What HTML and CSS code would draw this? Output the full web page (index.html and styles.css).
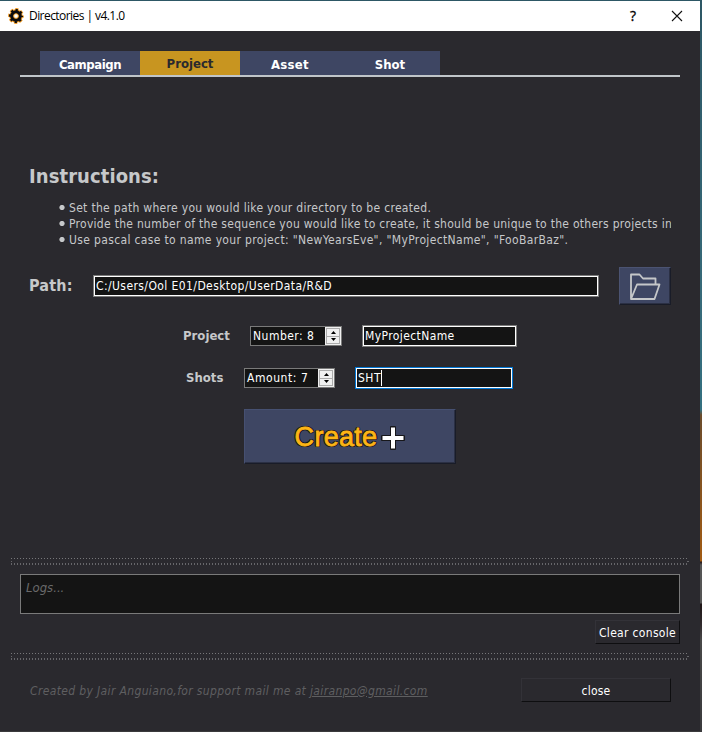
FILE: index.html
```html
<!DOCTYPE html>
<html lang="en">
<head>
<meta charset="utf-8">
<title>Directories | v4.1.0</title>
<link rel="stylesheet" href="styles.css">
</head>
<body>
<div class="window">
  <header class="titlebar">
    <svg class="gear" width="16" height="16" viewBox="0 0 16 16"><g fill="none" stroke="#f39a1d"><circle cx="8" cy="8" r="4.2" stroke-width="5"/><circle cx="8" cy="8" r="6.1" stroke-width="3.6" stroke-dasharray="2.9 1.89" stroke-dashoffset="1.4"/></g><g fill="none" stroke="#0c0c10"><circle cx="8" cy="8" r="4.2" stroke-width="3.2"/><circle cx="8" cy="8" r="5.9" stroke-width="2.2" stroke-dasharray="2.2 2.434" stroke-dashoffset="1.1"/></g><circle cx="8" cy="8" r="2.3" fill="#fff" stroke="#f39a1d" stroke-width=".8"/></svg>
    <span class="title">Directories | v4.1.0</span>
    <span class="help">?</span>
    <svg class="x" width="12" height="12" viewBox="0 0 12 12"><path d="M1 1l10 10M11 1L1 11" stroke="#111" stroke-width="1.1"/></svg>
  </header>
  <nav class="tabs"><span class="campaign">Campaign</span><span class="active">Project</span><span class="asset">Asset</span><span>Shot</span></nav>
  <main>
    <h1>Instructions:</h1>
    <ul>
      <li class="l1">Set the path where you would like your directory to be created.</li>
      <li class="l2">Provide the number of the sequence you would like to create, it should be unique to the others projects in</li>
      <li class="l3">Use pascal case to name your project: "NewYearsEve", "MyProjectName", "FooBarBaz".</li>
    </ul>
    <div class="path-row">
      <span class="path-label">Path:</span>
      <div class="field path"><span>C:/Users/Ool E01/Desktop/UserData/R&amp;D</span></div>
      <button class="folder"><svg width="32" height="28" viewBox="0 0 32 28"><path d="M2 27V2.500h8.500l3.500 4h12.500v5M2 27L8 12.500h22.500L25.500 27z" fill="none" stroke="#c5c7c9" stroke-width="1.800" stroke-linejoin="round"/></svg></button>
    </div>
    <div class="row project">
      <span class="label">Project</span>
      <div class="spin"><span>Number: 8</span><div class="steps"><i><svg width="5" height="3"><path d="M0 3L2.500 0 5 3z"/></svg></i><i><svg width="5" height="3"><path d="M0 0h5L2.500 3z"/></svg></i></div></div>
      <div class="field name"><span>MyProjectName</span></div>
    </div>
    <div class="row shots">
      <span class="label">Shots</span>
      <div class="spin"><span>Amount: 7</span><div class="steps"><i><svg width="5" height="3"><path d="M0 3L2.500 0 5 3z"/></svg></i><i><svg width="5" height="3"><path d="M0 0h5L2.500 3z"/></svg></i></div></div>
      <div class="field prefix"><span>SHT</span><b class="caret"></b></div>
    </div>
    <button class="create"><span>Create</span><svg width="24" height="24" viewBox="0 0 24 24"><path d="M12 2v20M2 12h20" stroke="#17171a" stroke-width="6" stroke-linecap="round"/><path d="M12 1.500v21M1.500 12h21" stroke="#fff" stroke-width="4"/></svg></button>
  </main>
  <div class="splitter"></div>
  <div class="logs"><em>Logs...</em></div>
  <button class="clear"><span>Clear console</span></button>
  <div class="splitter second"></div>
  <footer>
    <em class="credit">Created by Jair Anguiano,for support mail me at <u>jairanpo@gmail.com</u></em>
    <button class="close"><span>close</span></button>
  </footer>
</div>
</body>
</html>
```
FILE: styles.css
```css
* { box-sizing: border-box; }
body {
  margin: 0; width: 702px; height: 732px; overflow: hidden;
  padding: 1px 2px 2px 0;
  background: linear-gradient(#2d5765 0, #376b7a 300px, #347080 410px, #6b4c2c 415px, #a25b13 561px, #24181a 562px, #555 565px, #555 603px, #201718 604px, #302a2d 625px, #484848 640px, #3a3a3c 732px);
  font: 12px/16px "DejaVu Sans Condensed", "DejaVu Sans", sans-serif;
  color: #c6c8ca;
}
.window { height: 730px; background: #2a292e; overflow: hidden; white-space: nowrap; display: flex; flex-direction: column; }
.window > * { flex-shrink: 0; }
button { font: inherit; color: #fff; padding: 0; border-radius: 0; display: flex; align-items: center; justify-content: center; }
.titlebar { height: 30px; background: #fff; color: #000; display: flex; align-items: center; padding: 0 17px 0 8px; font: 12px/16px "Open Sans", sans-serif; }
.title { margin-left: 5px; letter-spacing: -.56px; }
.help { margin-left: auto; font-size: 14px; -webkit-text-stroke: .3px #000; }
.x { margin-left: 35px; }
.tabs { display: flex; height: 46px; margin: 0 20px; padding: 20px 20px 0; border-bottom: 2px solid #c0c5c9; }
.tabs span { width: 100px; background: #3e4663; color: #fff; font-weight: bold; font-size: 13px; line-height: 27px; text-align: center; }
.tabs .active { background: #c89520; color: #2a292e; line-height: 25px; }
.tabs .campaign { letter-spacing: -.45px; }
.tabs .asset { letter-spacing: .3px; }
main { height: 481px; padding: 84px 29px 0 29px; }
h1 { margin: 0; font-size: 20px; line-height: 30px; height: 39px; letter-spacing: .08px; }
ul { margin: 0; padding: 0 0 0 40px; height: 67px; list-style: none; width: 642px; }
li { height: 16px; overflow: hidden; margin-left: -10px; padding-left: 10px; background: radial-gradient(circle at 3px 7.5px, #c6c8ca 2.200px, transparent 3px); }
.l1 { letter-spacing: .31px; }
.l2 { letter-spacing: .28px; }
.l3 { letter-spacing: .35px; }
.path-row { display: flex; align-items: center; height: 38px; }
.path-label { width: 64px; font-size: 16px; font-weight: bold; letter-spacing: .2px; }
.field { height: 22px; border: 1px solid #7a7a7a; box-shadow: inset 0 0 0 1px #fff; background: #141414; color: #fff; line-height: 20px; padding-left: 2px; display: flex; align-items: center; }
.path { width: 506px; letter-spacing: .41px; }
.folder { width: 52px; height: 38px; margin-left: 20px; background: #3e4663; border: 1px solid #4b5372; border-right-color: #191c28; border-bottom-color: #191c28; box-shadow: inset -1px -1px #2b3044; }
.row { display: flex; align-items: center; height: 22px; }
.project { margin: 20px 0 0 154px; }
.shots { margin: 20px 0 0 157px; }
.label { font-size: 13px; font-weight: bold; width: 67px; }
.shots .label { width: 58px; }
.spin { width: 92px; height: 20px; border: 1px solid #7a7a7a; background: #141414; color: #fff; padding-left: 2px; display: flex; align-items: center; justify-content: space-between; letter-spacing: .48px; }
.shots .spin { width: 91px; letter-spacing: .55px; }
.steps { width: 16px; height: 18px; background: #f0f0f0; padding: 1px; display: flex; flex-direction: column; }
.steps i { flex: 1; display: flex; align-items: center; justify-content: center; border: 1px solid #acacac; }
.steps i + i { border-top: 0; }
.name { width: 155px; margin-left: 20px; letter-spacing: .4px; }
.prefix { width: 158px; margin-left: 20px; border-color: #0078d7; letter-spacing: .5px; }
.caret { width: 1px; height: 16px; background: #fff; }
.create { width: 212px; height: 55px; margin: 20px 0 0 215px; background: #3e4663; border: 1px solid #465071; border-right-color: #191c28; border-bottom-color: #191c28; box-shadow: inset -1px -1px #2b3044; font: 27px/30px "Liberation Sans", sans-serif; color: #fdb515; gap: 4px; }
.create span { letter-spacing: .3px; -webkit-text-stroke: .8px #fdb515; text-shadow: -1px -1px #17171a, 0 -1.300px #17171a, 1px -1px #17171a, -1.300px 0 #17171a, 1.300px 0 #17171a, -1px 1px #17171a, 0 1.300px #17171a, 1px 1px #17171a; }
.create svg { margin-top: 2px; }
.splitter { height: 8px; margin: 0 11px; background:
  repeating-linear-gradient(90deg, #77777a 0 1px, transparent 1px 3px) 0 0 / 100% 1px no-repeat,
  repeating-linear-gradient(90deg, #66666a 0 1px, transparent 1px 3px) 0 5px / 100% 2px no-repeat,
  linear-gradient(#66666a, #66666a) 0 3px / 1px 1px no-repeat,
  linear-gradient(#66666a, #66666a) 100% 3px / 2px 1px no-repeat; }
.logs { margin: 8px 20px 0; height: 40px; border: 1px solid #7a7a7a; background: #141414; color: #69696a; padding: 5px; font-size: 13px; }
.clear { width: 85px; height: 24px; margin: 6px 0 0 595px; letter-spacing: .32px; }
.clear, .close { background: #2a292e; border: 1px solid #333238; border-right: 1px solid #0e0e10; border-bottom: 1px solid #0e0e10; }
.clear span, .close span { padding-top: 1px; }
.second { margin-top: 9px; }
footer { display: flex; align-items: center; padding: 0 29px 0 30px; margin-top: 17px; color: #5f5f61; }
.credit { letter-spacing: .36px; padding-top: 1px; }
.close { width: 150px; height: 24px; margin-left: auto; letter-spacing: .2px; }
```
